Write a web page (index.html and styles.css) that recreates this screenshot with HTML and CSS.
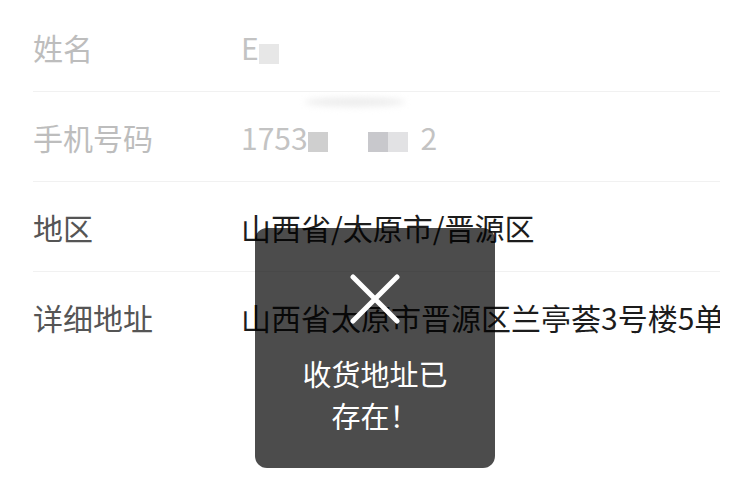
FILE: index.html
```html
<!DOCTYPE html>
<html lang="zh-CN">
<head>
<meta charset="utf-8">
<title>收货地址</title>
<link rel="stylesheet" href="styles.css">
</head>
<body>
<div class="form">
  <div class="row disabled">
    <div class="label">姓名</div>
    <div class="value">E<span class="mask mask-light"></span></div>
  </div>
  <div class="row disabled">
    <div class="label">手机号码</div>
    <div class="value">1753<span class="mask mask-mid"></span><span class="gap"></span><span class="mask mask-dark"></span><span class="mask mask-light2"></span><span class="tail">2</span></div>
    <span class="smudge"></span>
  </div>
  <div class="row">
    <div class="label">地区</div>
    <div class="value">山西省/太原市/晋源区</div>
  </div>
  <div class="row last">
    <div class="label">详细地址</div>
    <div class="value">山西省太原市晋源区兰亭荟3号楼5单元</div>
  </div>
</div>
<div class="toast">
  <svg class="toast-icon" width="50" height="50" viewBox="0 0 50 50">
    <path d="M3 3 L47 47 M47 3 L3 47" stroke="#fff" stroke-width="5" stroke-linecap="round" fill="none"/>
  </svg>
  <div class="toast-text">收货地址已存在！</div>
</div>
</body>
</html>
```
FILE: styles.css
```css
html, body {
  margin: 0;
  padding: 0;
  background: #fff;
}
body {
  font-family: "Noto Sans CJK SC", "Noto Sans", sans-serif;
  width: 750px;
  height: 497px;
  overflow: hidden;
  position: relative;
}
.form {
  margin-left: 33px;
  width: 687px;
  padding-top: 2px;
}
.row {
  position: relative;
  height: 90px;
  box-sizing: border-box;
  border-bottom: 1px solid #f1f1f1;
  display: flex;
  align-items: center;
  font-size: 30px;
  color: #1c1c1c;
  overflow: hidden;
  white-space: nowrap;
  padding-top: 0;
}
.row.last {
  border-bottom: none;
}
.label {
  width: 208px;
  flex: none;
  color: #555;
}
.value {
  flex: none;
  display: flex;
  align-items: center;
}
.disabled .label {
  color: #bdbdbd;
}
.disabled .value {
  color: #c3c3c3;
}
.mask {
  display: inline-block;
  width: 20px;
  height: 20px;
}
.mask-light {
  background: #e7e7e7;
  margin-top: 14px;
}
.mask-mid {
  background: #cfcfcf;
  margin-top: 10px;
}
.mask-dark {
  background: #c8c8cc;
  margin-top: 10px;
}
.mask-light2 {
  background: #e2e2e4;
  margin-top: 10px;
}
.gap {
  display: inline-block;
  width: 40px;
}
.tail {
  margin-left: 13px;
}
.smudge {
  position: absolute;
  left: 272px;
  top: 5px;
  width: 100px;
  height: 10px;
  border-radius: 50%;
  background: #eeeeee;
  filter: blur(3px);
}
.toast {
  position: absolute;
  left: 255px;
  top: 228px;
  width: 240px;
  height: 240px;
  box-sizing: border-box;
  border-radius: 12px;
  background: rgba(0, 0, 0, 0.7);
  display: flex;
  flex-direction: column;
  align-items: center;
  padding: 46px 40px 0;
}
.toast-icon {
  display: block;
}
.toast-text {
  margin-top: 28px;
  color: #fff;
  font-size: 29px;
  line-height: 42px;
  text-align: center;
  width: 160px;
}
```
